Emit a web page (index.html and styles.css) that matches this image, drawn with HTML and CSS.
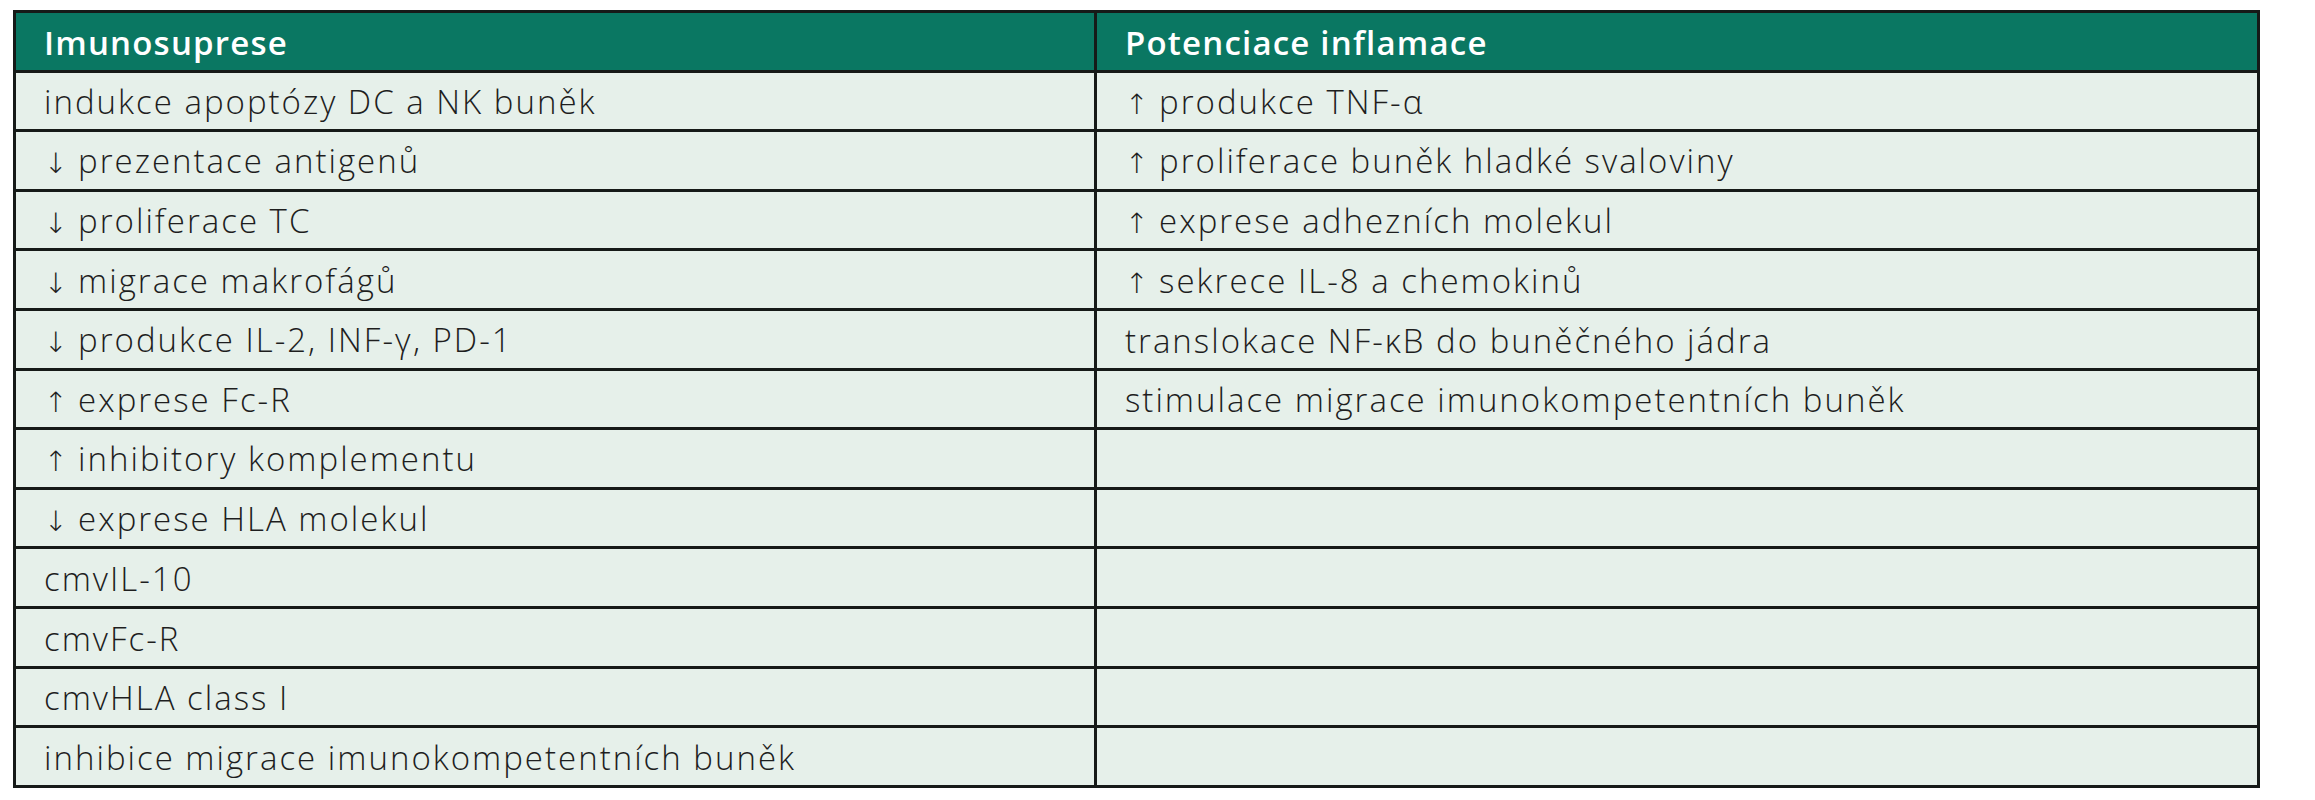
FILE: index.html
```html
<!DOCTYPE html>
<html lang="cs">
<head>
<meta charset="utf-8">
<title>Imunosuprese a potenciace inflamace</title>
<link rel="stylesheet" href="styles.css">
</head>
<body>
<table class="grid">
  <thead>
    <tr><th class="col-a">Imunosuprese</th><th class="col-b">Potenciace inflamace</th></tr>
  </thead>
  <tbody>
    <tr><td>indukce apoptózy DC a NK buněk</td><td><span class="arr">↑</span> produkce TNF-α</td></tr>
    <tr><td><span class="arr">↓</span> prezentace antigenů</td><td><span class="arr">↑</span> proliferace buněk hladké svaloviny</td></tr>
    <tr><td><span class="arr">↓</span> proliferace TC</td><td><span class="arr">↑</span> exprese adhezních molekul</td></tr>
    <tr><td><span class="arr">↓</span> migrace makrofágů</td><td><span class="arr">↑</span> sekrece IL-8 a chemokinů</td></tr>
    <tr><td><span class="arr">↓</span> produkce IL-2, INF-γ, PD-1</td><td>translokace NF-κB do buněčného jádra</td></tr>
    <tr><td><span class="arr">↑</span> exprese Fc-R</td><td>stimulace migrace imunokompetentních buněk</td></tr>
    <tr><td><span class="arr">↑</span> inhibitory komplementu</td><td></td></tr>
    <tr><td><span class="arr">↓</span> exprese HLA molekul</td><td></td></tr>
    <tr><td>cmvIL-10</td><td></td></tr>
    <tr><td>cmvFc-R</td><td></td></tr>
    <tr><td>cmvHLA class I</td><td></td></tr>
    <tr><td>inhibice migrace imunokompetentních buněk</td><td></td></tr>
  </tbody>
</table>
</body>
</html>
```

FILE: styles.css
```css
html, body {
  margin: 0;
  padding: 0;
  background: #ffffff;
}

body {
  padding: 10px 0 0 13px;
  font-family: "Open Sans", "DejaVu Sans", sans-serif;
}

.grid {
  border-collapse: collapse;
  width: 2247px;
  table-layout: fixed;
  border: 3px solid #161a18;
}

.col-a { width: 1081px; }

.grid th,
.grid td {
  border: 3px solid #161a18;
  height: 59.6px;
  padding: 2px 0 0 28px;
  box-sizing: border-box;
  text-align: left;
  vertical-align: middle;
  white-space: nowrap;
  font-size: 33px;
  line-height: 1;
}

.grid th {
  background: #0a7762;
  color: #ffffff;
  font-weight: 600;
  letter-spacing: 1.2px;
}

.grid td {
  background: #e6f0ea;
  color: #1e1e1e;
  font-weight: 300;
  letter-spacing: 2px;
}

.arr {
  font-family: "DejaVu Sans", sans-serif;
  font-weight: 300;
  font-size: 0.85em;
  letter-spacing: 0;
}
```
